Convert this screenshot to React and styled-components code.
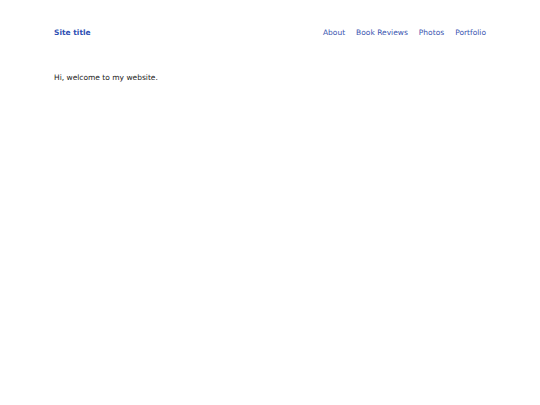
import React from 'react';
import styled, { createGlobalStyle } from 'styled-components';

const GlobalStyle = createGlobalStyle`
  body {
    margin: 0;
    padding: 0;
    background: #fff;
    font-family: "DejaVu Sans", Verdana, sans-serif;
    color: #222;
  }
`;

const Page = styled.div`
  padding: 28px 54px;
  font-size: 7.5px;
  line-height: 1.2;
`;

const Header = styled.header`
  display: flex;
  justify-content: space-between;
  align-items: center;
`;

const SiteTitle = styled.a`
  color: #2f4fb3;
  font-weight: bold;
  text-decoration: none;
`;

const Nav = styled.nav`
  display: flex;
  gap: 11px;
`;

const NavLink = styled.a`
  color: #3a55b0;
  text-decoration: none;
`;

const Content = styled.main`
  margin-top: 36px;
`;

export default function App() {
  return (
    <>
      <GlobalStyle />
      <Page>
        <Header>
          <SiteTitle href="#">Site title</SiteTitle>
          <Nav>
            <NavLink href="#">About</NavLink>
            <NavLink href="#">Book Reviews</NavLink>
            <NavLink href="#">Photos</NavLink>
            <NavLink href="#">Portfolio</NavLink>
          </Nav>
        </Header>
        <Content>Hi, welcome to my website.</Content>
      </Page>
    </>
  );
}
